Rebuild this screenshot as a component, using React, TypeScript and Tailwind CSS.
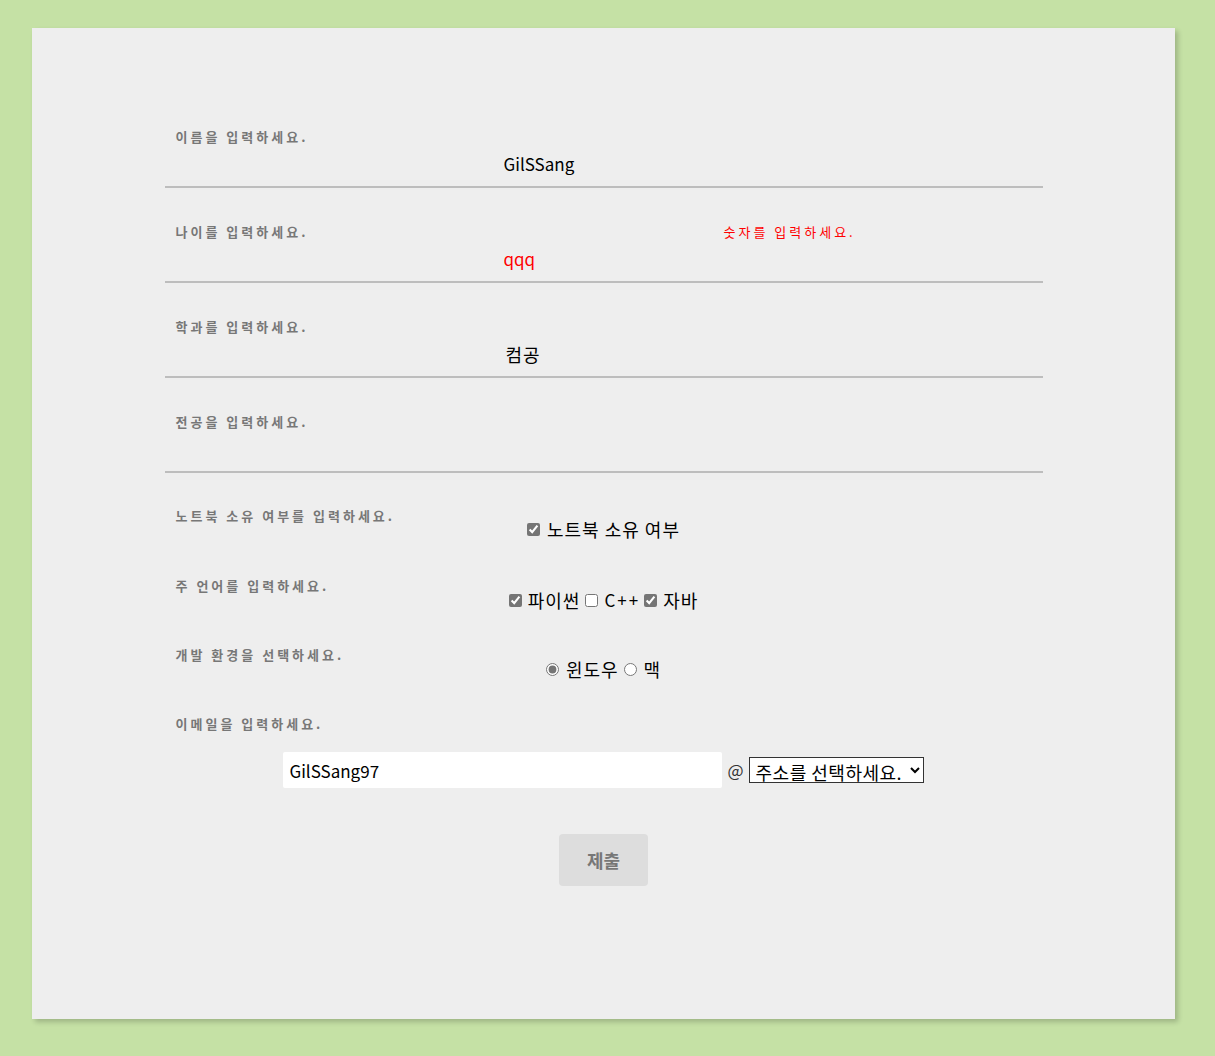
import React from 'react';

const KR = { fontFamily: '"Noto Sans CJK KR", "Noto Sans", sans-serif' };

function FieldRow({ label, value, error, red, hangul }: { label: string; value: string; error?: string; red?: boolean; hangul?: boolean }) {
  return (
    <div className="border-b-2 border-[#bdbdbd] pt-[35px] pb-[10px]">
      <div className="flex h-[18px] items-center">
        <label className="w-[559px] pl-[11px] text-[13px] leading-[18px] font-bold tracking-[3px] text-[#777777]">{label}</label>
        {error && <span className="text-[13px] leading-[18px] tracking-[3px] text-[#ff0000]">{error}</span>}
      </div>
      <div className="mt-[6px] flex h-[24px] justify-center">
        <input
          readOnly
          value={value}
          className={`w-[200px] bg-transparent leading-[24px] outline-none ${hangul ? 'pl-[2px] text-[18px] tracking-[1px]' : 'text-[17px]'} ${red ? 'text-[#ff0000]' : 'text-black'}`}
          style={KR}
        />
      </div>
    </div>
  );
}

function Label({ children }: { children: React.ReactNode }) {
  return (
    <div className="h-[18px] pl-[11px] text-[13px] leading-[18px] font-bold tracking-[3px] text-[#777777]">{children}</div>
  );
}

export default function App() {
  return (
    <div className="min-h-[1056px] bg-[#c5e1a5] pt-[28px] pb-[37px]" style={KR}>
      <div className="ml-[32px] h-[991px] w-[1143px] bg-[#eeeeee] shadow-[3px_3px_5px_rgba(0,0,0,0.2)]">
        <form className="mx-auto w-[878px] pt-[65px]">
          <FieldRow label="이름을 입력하세요." value="GilSSang" />
          <FieldRow label="나이를 입력하세요." value="qqq" error="숫자를 입력하세요." red />
          <FieldRow label="학과를 입력하세요." value="컴공" hangul />
          <FieldRow label="전공을 입력하세요." value="" />

          <div className="pt-[34px]">
            <Label>노트북 소유 여부를 입력하세요.</Label>
            <div className="-mt-[8px] flex h-[24px] items-center justify-center gap-[7px] text-[18px] leading-[24px] tracking-[1px] text-black">
              <input type="checkbox" defaultChecked className="h-[13px] w-[13px] accent-[#757575]" />
              <span>노트북 소유 여부</span>
            </div>
          </div>

          <div className="pt-[36px]">
            <Label>주 언어를 입력하세요.</Label>
            <div className="-mt-[7px] flex h-[24px] items-center justify-center text-[18px] leading-[24px] tracking-[1px] text-black">
              <input type="checkbox" defaultChecked className="mr-[6px] h-[13px] w-[13px] accent-[#757575]" />
              <span>파이썬</span>
              <input type="checkbox" className="mr-[6px] ml-[5px] h-[13px] w-[13px] accent-[#757575]" />
              <span className="text-[17px] tracking-[2px]">C++</span>
              <input type="checkbox" defaultChecked className="mr-[6px] ml-[4px] h-[13px] w-[13px] accent-[#757575]" />
              <span>자바</span>
            </div>
          </div>

          <div className="pt-[34px]">
            <Label>개발 환경을 선택하세요.</Label>
            <div className="-mt-[7px] flex h-[24px] items-center justify-center text-[18px] leading-[24px] tracking-[1px] text-black">
              <input type="radio" name="env" defaultChecked className="mr-[7px] h-[13px] w-[13px] accent-[#757575]" />
              <span>윈도우</span>
              <input type="radio" name="env" className="mr-[7px] ml-[5px] h-[13px] w-[13px] accent-[#757575]" />
              <span>맥</span>
            </div>
          </div>

          <div className="pt-[34px]">
            <Label>이메일을 입력하세요.</Label>
            <div className="mt-[19px] flex items-center justify-center">
              <input
                readOnly
                value="GilSSang97"
                className="h-[36px] w-[439px] rounded-[2px] bg-white px-[6px] text-[17px] text-black outline-none"
                style={KR}
              />
              <span className="mx-[5px] text-[17px] text-[#333]">@</span>
              <select
                className="h-[26px] w-[175px] border border-[#333] bg-white px-[2px] text-[18px] leading-[24px] tracking-[0.5px] text-black"
                style={KR}
                defaultValue=""
              >
                <option value="">주소를 선택하세요.</option>
                <option value="naver.com">naver.com</option>
                <option value="gmail.com">gmail.com</option>
              </select>
            </div>
          </div>

          <div className="mt-[46px] flex justify-center">
            <button type="button" className="h-[52px] w-[89px] rounded-[4px] bg-[#dddddd] text-[18px] font-bold text-[#777777]">
              제출
            </button>
          </div>
        </form>
      </div>
    </div>
  );
}
